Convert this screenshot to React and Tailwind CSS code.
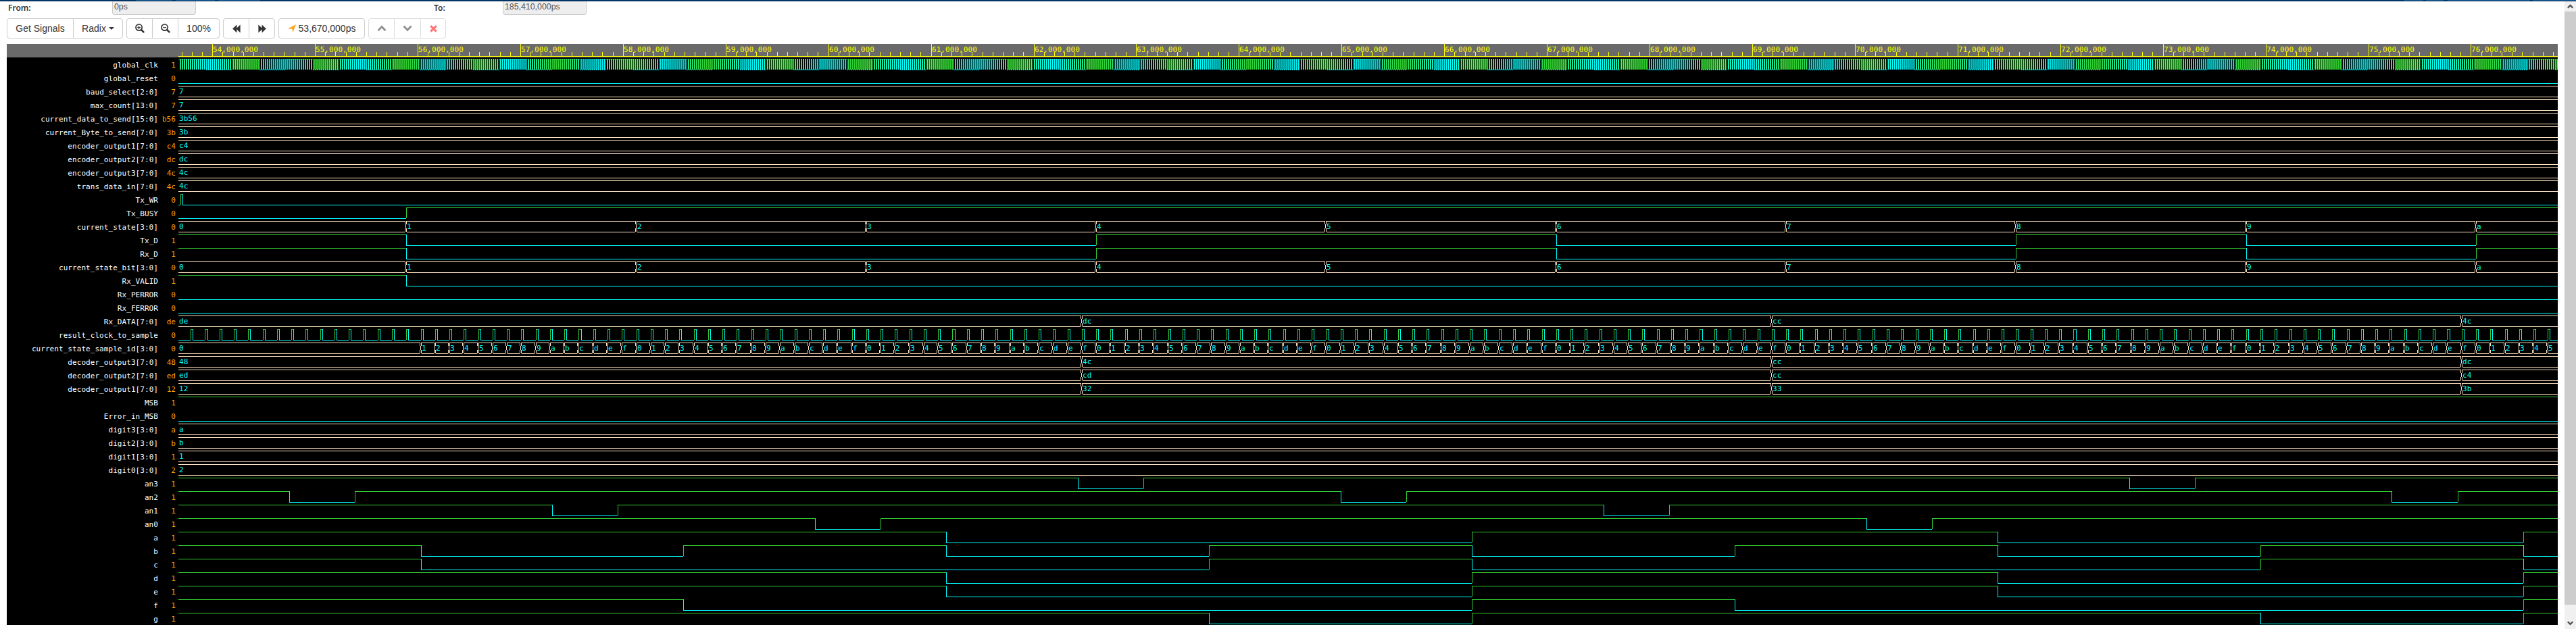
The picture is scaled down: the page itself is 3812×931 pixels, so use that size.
import React from "react";

const START = 53.67; // left edge of the view, in millions of ps
const SCALE = 151.923; // pixels per million ps
const WIDTH = 3521;
const END = START + WIDTH / SCALE;
const px = (dt) => Math.round(dt * SCALE);

const GREEN = "#32cd32";
const CYAN = "#00ffff";
const BISQUE = "#ffe4c4";

const range = (n, f) => Array.from({ length: n }, (_, i) => f(i));

const stateChanges = range(10, (i) => [2.22 + i * 2.24, "123456789a"[i]]);
const sampleChanges = range(160, (i) => [2.36 + i * 0.14, ((i + 1) % 16).toString(16)]);
const frameChanges = (vals) => vals.map((v, i) => [8.8 + i * 6.72, v]);
const samplePulses = range(166, (i) => [0.12 + i * 0.14, 0.14 + i * 0.14]).flat();
const clockEdges = range(2320, (i) => (i + 1) * 0.01);

const bit = (name, value, edges = []) => ({ kind: "bit", name, value, edges });
const bus = (name, value, first, changes = []) => ({ kind: "bus", name, value, first, changes });

const SIGNALS = [
  bit("global_clk", "1", clockEdges),
  bit("global_reset", "0"),
  bus("baud_select[2:0]", "7", "7"),
  bus("max_count[13:0]", "7", "7"),
  bus("current_data_to_send[15:0]", "b56", "3b56"),
  bus("current_Byte_to_send[7:0]", "3b", "3b"),
  bus("encoder_output1[7:0]", "c4", "c4"),
  bus("encoder_output2[7:0]", "dc", "dc"),
  bus("encoder_output3[7:0]", "4c", "4c"),
  bus("trans_data_in[7:0]", "4c", "4c"),
  bit("Tx_WR", "0", [0.02, 0.04]),
  bit("Tx_BUSY", "0", [2.22]),
  bus("current_state[3:0]", "0", "0", stateChanges),
  bit("Tx_D", "1", [2.22, 8.94, 13.42, 17.9, 20.14, 22.38]),
  bit("Rx_D", "1", [2.22, 8.94, 13.42, 17.9, 20.14, 22.38]),
  bus("current_state_bit[3:0]", "0", "0", stateChanges),
  bit("Rx_VALID", "1", [2.22]),
  bit("Rx_PERROR", "0"),
  bit("Rx_FERROR", "0"),
  bus("Rx_DATA[7:0]", "de", "de", frameChanges(["dc", "cc", "4c"])),
  bit("result_clock_to_sample", "0", samplePulses),
  bus("current_state_sample_id[3:0]", "0", "0", sampleChanges),
  bus("decoder_output3[7:0]", "48", "48", frameChanges(["4c", "cc", "dc"])),
  bus("decoder_output2[7:0]", "ed", "ed", frameChanges(["cd", "cc", "c4"])),
  bus("decoder_output1[7:0]", "12", "12", frameChanges(["32", "33", "3b"])),
  bit("MSB", "1"),
  bit("Error_in_MSB", "0"),
  bus("digit3[3:0]", "a", "a"),
  bus("digit2[3:0]", "b", "b"),
  bus("digit1[3:0]", "1", "1"),
  bus("digit0[3:0]", "2", "2"),
  bit("an3", "1", [8.76, 9.4, 19.0, 19.64]),
  bit("an2", "1", [1.08, 1.72, 11.32, 11.96, 21.56, 22.2]),
  bit("an1", "1", [3.64, 4.28, 13.88, 14.52]),
  bit("an0", "1", [6.2, 6.84, 16.44, 17.08]),
  bit("a", "1", [7.48, 12.6, 17.72, 22.84]),
  bit("b", "1", [2.36, 4.92, 7.48, 10.04, 12.6, 15.16, 17.72, 20.28, 22.84]),
  bit("c", "1", [2.36, 10.04, 12.6, 20.28, 22.84]),
  bit("d", "1", [7.48, 12.6, 17.72, 22.84]),
  bit("e", "1", [7.48, 12.6, 17.72, 22.84]),
  bit("f", "1", [4.92, 12.6, 15.16, 22.84]),
  bit("g", "1", [10.04, 12.6, 20.28, 22.84]),
];

const h = (x, y, w) => (w > 0 ? `M${x} ${y}h${w}v1h${-w}z` : "");
const v = (x, y, len) => `M${x} ${y}h1v${len}h-1z`;

function BitWave({ value, edges }) {
  let level = value === "1";
  let x = 0;
  let high = "";
  let low = "";
  const segment = (to) => {
    const w = to - x;
    if (level) high += h(x, 2, w);
    else if (w > 1) low += h(x, 18, w);
  };
  for (const t of edges) {
    const at = px(t);
    if (at >= WIDTH) break;
    segment(at);
    level = !level;
    x = at;
    if (level) high += v(at, 2, 16);
    else low += v(at, 2, 16);
  }
  segment(WIDTH);
  return (
    <svg width={WIDTH} height="20" className="block shrink-0" shapeRendering="crispEdges">
      <path d={high} fill={GREEN} />
      <path d={low} fill={CYAN} />
    </svg>
  );
}

function BusWave({ first, changes }) {
  let d = "";
  let x = 0;
  const labels = [[0, first]];
  for (const [t, text] of changes) {
    const at = px(t);
    if (at >= WIDTH) break;
    d += h(x, 2, at - 1 - x) + h(x ? x + 1 : 0, 18, at - 2 - (x ? x + 1 : 0));
    d += v(at - 2, 2, 5) + v(at - 1, 7, 6) + v(at - 2, 13, 5);
    d += v(at, 2, 5) + v(at, 13, 5);
    labels.push([at, text]);
    x = at;
  }
  d += h(x, 2, WIDTH - x) + h(x ? x + 1 : 0, 18, WIDTH - x);
  return (
    <svg width={WIDTH} height="20" className="block shrink-0">
      <path d={d} fill={BISQUE} shapeRendering="crispEdges" />
      {labels.map(([at, text]) => (
        <text key={at} x={at + 1} y="14" fill={CYAN}>
          {text}
        </text>
      ))}
    </svg>
  );
}

function Ruler() {
  let ticks = "";
  const labels = [];
  for (let i = 537; i / 10 < END; i++) {
    const x = px(i / 10 - START);
    if (i % 10 === 0) {
      ticks += v(x, 0, 18);
      labels.push([x, `${i / 10},000,000`]);
    } else {
      ticks += v(x, 12, 6);
    }
  }
  return (
    <svg width={WIDTH} height="20" className="block shrink-0">
      <path d={ticks + h(0, 18, WIDTH)} fill="#ffff00" shapeRendering="crispEdges" />
      {labels.map(([x, text]) => (
        <text key={x} x={x + 1} y="12" fill="#ffff00">
          {text}
        </text>
      ))}
    </svg>
  );
}

function Group({ widths, disabled, children }) {
  return (
    <div
      className={
        "flex h-[30px] rounded-[4px] border border-[#ccc] bg-white divide-x divide-[#ccc]" +
        (disabled ? " opacity-65" : "")
      }
    >
      {React.Children.map(children, (c, i) => (
        <button className="flex h-full items-center justify-center whitespace-nowrap" style={{ width: widths[i] }}>
          {c}
        </button>
      ))}
    </div>
  );
}

function Magnifier({ plus }) {
  return (
    <svg width="14" height="14" viewBox="0 0 14 14" fill="none" stroke="#333">
      <circle cx="5.6" cy="5.6" r="4.6" strokeWidth="1.7" />
      <path d="M9 9l3.4 3.4" strokeWidth="2.6" strokeLinecap="round" />
      <path d={plus ? "M3.2 5.6h4.8M5.6 3.2v4.8" : "M3.2 5.6h4.8"} strokeWidth="1.3" />
    </svg>
  );
}

function Seek({ flip }) {
  return (
    <svg width="12" height="13" viewBox="0 0 12 13" fill="#333" className={flip ? "rotate-180" : ""}>
      <path d="M6.4 0.4v5.2l5.2-5.2v12.2l-5.2-5.2v5.2L0.2 6.5z" />
    </svg>
  );
}

function Chevron({ down }) {
  return (
    <svg width="14" height="10" viewBox="0 0 14 10" fill="none" stroke="#555" strokeWidth="2.8" className={down ? "rotate-180" : ""}>
      <path d="M1.6 8.2L7 2.6l5.4 5.6" />
    </svg>
  );
}

function Field({ children }) {
  return (
    <div className="flex h-[20px] w-[124px] items-center rounded-b-[4px] border border-t-0 border-[#ccc] bg-[#eee] pb-[2px] pl-[2px] text-[12.35px] leading-none text-[#555]">
      {children}
    </div>
  );
}

function Scrollbar() {
  return (
    <div className="flex w-[17px] shrink-0 flex-col bg-[#f0f0f0]">
      <div className="flex h-[15px] items-center justify-center">
        <svg width="9" height="7" viewBox="0 0 9 7" fill="none" stroke="#505050" strokeWidth="2.2">
          <path d="M0.8 5.6L4.5 1.9l3.7 3.7" />
        </svg>
      </div>
      <div className="h-[878px] bg-[#cdcdcd]" />
      <div className="flex flex-1 items-end justify-center pb-[5px]">
        <svg width="9" height="7" viewBox="0 0 9 7" fill="none" stroke="#505050" strokeWidth="2.2">
          <path d="M0.8 1.2l3.7 3.7 3.7-3.7" />
        </svg>
      </div>
    </div>
  );
}

const TABS = [
  [201, 54], [5, 58], [5, 62], [3172, 29], [4, 26], [6, 122], [4, 64],
];

export default function App() {
  return (
    <div className="flex h-[931px] w-[3812px] flex-col overflow-hidden bg-white font-['Liberation_Sans',Arial,sans-serif] text-[#333]">
      <div className="flex h-[2px] shrink-0 border-b border-[#00244a] bg-[#003a6e]">
        {TABS.map(([gap, w], i) => (
          <div key={i} className="h-px bg-[#1c64a4]" style={{ marginLeft: gap, width: w }} />
        ))}
      </div>
      <div className="flex min-h-0 flex-1">
        <div className="flex min-w-0 flex-1 flex-col pl-[10px]">
          <div className="flex h-[20px] shrink-0">
            <div className="w-[156px] pl-[2px] pt-px font-['Noto_Sans',sans-serif] text-[12px] font-semibold leading-[18px]">From:</div>
            <Field>0ps</Field>
            <div className="ml-[352px] w-[102px] pt-px font-['Noto_Sans',sans-serif] text-[12px] font-semibold leading-[18px]">To:</div>
            <Field>185,410,000ps</Field>
          </div>
          <div className="mt-[5px] flex shrink-0 gap-[5px] text-[14px] leading-none">
            <Group widths={[98, 72]}>
              <span>Get Signals</span>
              <span className="flex items-center gap-1">
                Radix
                <svg width="8" height="4" viewBox="0 0 8 4" fill="#333">
                  <path d="M0 0h8L4 4z" />
                </svg>
              </span>
            </Group>
            <Group widths={[38, 38, 60]}>
              <Magnifier plus />
              <Magnifier />
              <span>100%</span>
            </Group>
            <Group widths={[38, 37]}>
              <Seek />
              <Seek flip />
            </Group>
            <Group widths={[126]}>
              <span className="flex items-center gap-1">
                <svg width="12" height="12" viewBox="0 0 11 11" fill="#ffa520">
                  <path d="M11 0L6.8 11 5.8 6.2 0 6z" />
                </svg>
                53,670,000ps
              </span>
            </Group>
            <Group widths={[38, 39, 36]} disabled>
              <Chevron />
              <Chevron down />
              <svg width="11" height="11" viewBox="0 0 11 11" stroke="#ff3030" strokeWidth="3.2">
                <path d="M1.3 1.3l8.4 8.4M9.7 1.3l-8.4 8.4" />
              </svg>
            </Group>
          </div>
          <div className="mt-[8px] flex w-[3775px] shrink-0 flex-col bg-black font-['DejaVu_Sans_Mono',monospace] text-[11px] tracking-[0.06px]">
            <div className="flex h-[20px] bg-[#6a6a6a] pl-[254px]">
              <Ruler />
            </div>
            {SIGNALS.map((s) => (
              <div key={s.name} className="flex h-[20px]">
                <div className="w-[224px] shrink-0 pt-px text-right leading-[21px] text-white">{s.name}</div>
                <div className="mr-[4px] w-[26px] shrink-0 pt-px text-right leading-[21px] text-[#ffa500]">{s.value}</div>
                {s.kind === "bit" ? <BitWave {...s} /> : <BusWave {...s} />}
              </div>
            ))}
          </div>
        </div>
        <Scrollbar />
      </div>
    </div>
  );
}
